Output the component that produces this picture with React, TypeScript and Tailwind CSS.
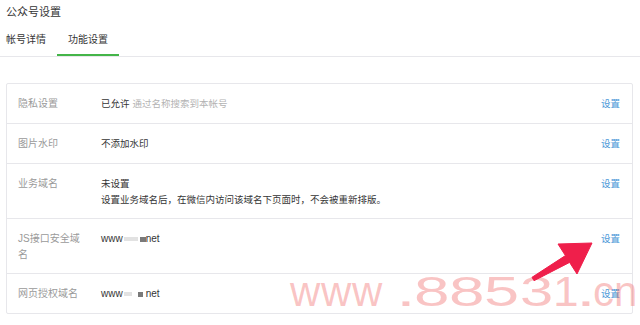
import React from "react";

const font = "font-['Liberation_Sans','Noto_Sans_CJK_SC',sans-serif]";

function Blur({ light, dark }: { light: string; dark: string }) {
  return (
    <>
      <span className={`inline-block h-[4px] bg-[#e2e2e2] align-middle ${light}`} />
      <span className={`inline-block h-[5px] bg-[#7a7a7a] align-middle ${dark}`} />
    </>
  );
}

export default function App() {
  return (
    <div className={`relative w-[640px] h-[325px] overflow-hidden bg-white ${font}`}>
      <div className="px-[6px] pt-[4px] text-[11px] leading-[16px] text-[#353535]">公众号设置</div>

      <div className="mt-[12px] flex border-b border-[#e7e7eb] px-[6px] text-[10px] leading-[16px] text-[#353535]">
        <div className="pb-[8px]">帐号详情</div>
        <div className="ml-[11px] border-b-2 border-[#44b549] px-[11px] pb-[6px]">功能设置</div>
      </div>

      <div className="ml-[6px] mr-[7px] mt-[26px] rounded-[2px] border border-[#e7e7eb]">
        {/* row 1 */}
        <div className="flex pl-[11px] pr-[12px] pt-[12px] pb-[11px]">
          <div className="w-[66px] mr-[17px] shrink-0 text-[10px] leading-[16px] text-[#9a9a9a]">隐私设置</div>
          <div className="flex-1 text-[9.5px] leading-[16px] text-[#353535]">
            已允许<span className="ml-[3px] text-[#b3b3b3]">通过名称搜索到本帐号</span>
          </div>
          <div className="text-[9.5px] leading-[16px] text-[#4a97d8]">设置</div>
        </div>
        {/* row 2 */}
        <div className="flex border-t border-[#e7e7eb] pl-[11px] pr-[12px] pt-[12px] pb-[11px]">
          <div className="w-[66px] mr-[17px] shrink-0 text-[10px] leading-[16px] text-[#9a9a9a]">图片水印</div>
          <div className="flex-1 text-[9.5px] leading-[16px] text-[#353535]">不添加水印</div>
          <div className="text-[9.5px] leading-[16px] text-[#4a97d8]">设置</div>
        </div>
        {/* row 3 */}
        <div className="flex border-t border-[#e7e7eb] pl-[11px] pr-[12px] pt-[12px] pb-[11px]">
          <div className="w-[66px] mr-[17px] shrink-0 text-[10px] leading-[16px] text-[#9a9a9a]">业务域名</div>
          <div className="flex-1 text-[9.5px] text-[#353535]">
            <div className="leading-[16px]">未设置</div>
            <div className="leading-[15px]">设置业务域名后，在微信内访问该域名下页面时，不会被重新排版。</div>
          </div>
          <div className="text-[9.5px] leading-[16px] text-[#4a97d8]">设置</div>
        </div>
        {/* row 4 */}
        <div className="flex border-t border-[#e7e7eb] pl-[11px] pr-[12px] pt-[12px] pb-[11px]">
          <div className="w-[66px] mr-[17px] shrink-0 text-[10px] leading-[15.5px] text-[#9a9a9a]">JS接口安全域名</div>
          <div className="flex-1 text-[10px] leading-[16px] text-[#353535]">
            www
            <Blur light="ml-[1px] w-[14px]" dark="ml-[2px] w-[6px]" />
            net
          </div>
          <div className="text-[9.5px] leading-[16px] text-[#4a97d8]">设置</div>
        </div>
        {/* row 5 */}
        <div className="flex border-t border-[#e7e7eb] pl-[11px] pr-[12px] pt-[12px] pb-[11px]">
          <div className="w-[66px] mr-[17px] shrink-0 text-[10px] leading-[16px] text-[#9a9a9a]">网页授权域名</div>
          <div className="flex-1 text-[10px] leading-[16px] text-[#353535]">
            www
            <Blur light="ml-[1px] w-[8px]" dark="ml-[6px] w-[5px]" />
            <span className="ml-[3px]">net</span>
          </div>
          <div className="text-[9.5px] leading-[16px] text-[#4a97d8]">设置</div>
        </div>
      </div>

      {/* watermark overlay */}
      <div className="pointer-events-none absolute inset-0 font-['Liberation_Sans',sans-serif] text-[42px] leading-none text-[rgba(240,100,100,0.38)]">
        <span className="absolute left-[290px] top-[271px]">w</span>
        <span className="absolute left-[321px] top-[271px]">w</span>
        <span className="absolute left-[352px] top-[271px]">w</span>
        <span className="absolute left-[396px] top-[271px] origin-left scale-x-[1.7]">.</span>
        <span className="absolute left-[414px] top-[271px] origin-left scale-x-[1.52]">8</span>
        <span className="absolute left-[449px] top-[271px] origin-left scale-x-[1.52]">8</span>
        <span className="absolute left-[484px] top-[271px] origin-left scale-x-[1.5]">5</span>
        <span className="absolute left-[520px] top-[271px] origin-left scale-x-[1.42]">3</span>
        <span className="absolute left-[553px] top-[271px] origin-left scale-x-[1.1]">1</span>
        <span className="absolute left-[576px] top-[271px] origin-left scale-x-[1.7]">.</span>
        <span className="absolute left-[593px] top-[271px]">c</span>
        <span className="absolute left-[614px] top-[271px]">n</span>
      </div>

      {/* red arrow overlay */}
      <svg className="pointer-events-none absolute left-0 top-0" width="640" height="325" viewBox="0 0 640 325">
        <polygon
          points="592,243 558,244 565.4,255.6 532,277.3 534,280.7 569.6,262.4 577,274"
          fill="#ef1f4b"
          stroke="#ef1f4b"
          strokeWidth="1"
          strokeLinejoin="round"
        />
      </svg>
    </div>
  );
}
